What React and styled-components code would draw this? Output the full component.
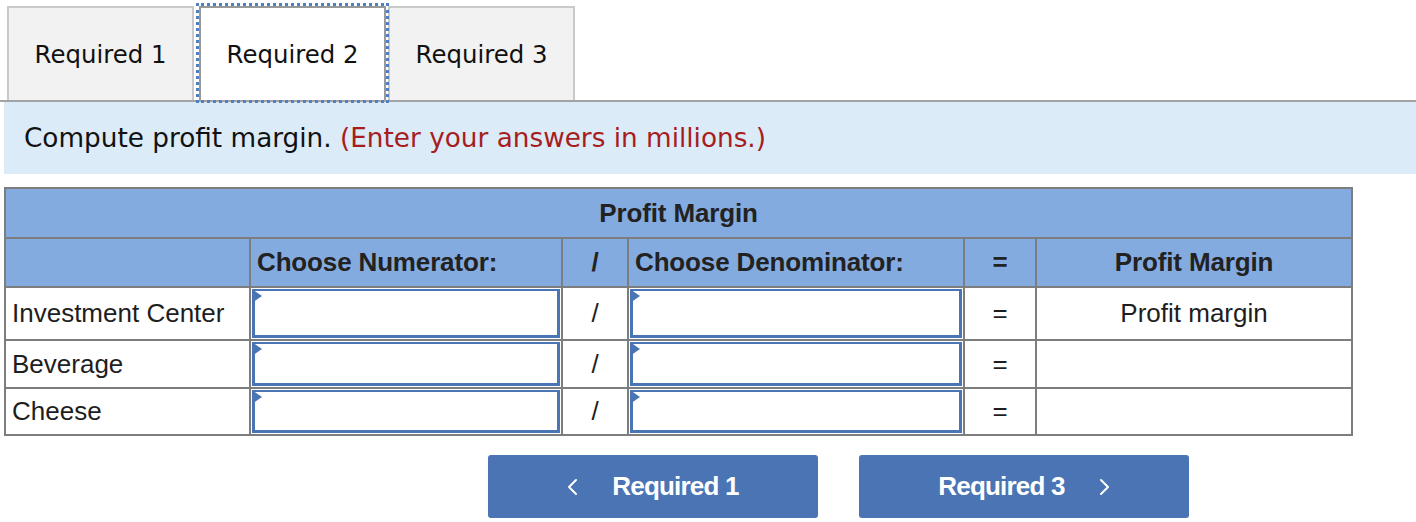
import React from 'react';
import styled, { createGlobalStyle } from 'styled-components';

const GlobalStyle = createGlobalStyle`
    body {
        margin: 0;
        background: #ffffff;
        font-family: 'Liberation Sans', Arial, sans-serif;
    }
`;

const rows = [
    { label: 'Investment Center', result: 'Profit margin', height: 53 },
    { label: 'Beverage', result: '', height: 48 },
    { label: 'Cheese', result: '', height: 47 },
];

function Chevron({ dir }) {
    const d = dir === 'left' ? 'M9 2 L2 9 L9 16' : 'M2 2 L9 9 L2 16';
    return (
        <svg width="11" height="18" viewBox="0 0 11 18">
            <path d={d} fill="none" stroke="#ffffff" strokeWidth="2" strokeLinecap="round" strokeLinejoin="round" />
        </svg>
    );
}

export default function App() {
    return (
        <Wrapper>
            <GlobalStyle />
            <TabBar>
                <Tab>Required 1</Tab>
                <Tab $active>Required 2</Tab>
                <Tab>Required 3</Tab>
            </TabBar>
            <Instruction>
                Compute profit margin. <Hint>(Enter your answers in millions.)</Hint>
            </Instruction>
            <Grid>
                <colgroup>
                    <col style={{ width: 245 }} />
                    <col style={{ width: 312 }} />
                    <col style={{ width: 66 }} />
                    <col style={{ width: 336 }} />
                    <col style={{ width: 72 }} />
                    <col style={{ width: 316 }} />
                </colgroup>
                <thead>
                    <HeadRow $h={50}>
                        <HeadCell colSpan={6} $align="center">Profit Margin</HeadCell>
                    </HeadRow>
                    <HeadRow $h={49}>
                        <HeadCell />
                        <HeadCell>Choose Numerator:</HeadCell>
                        <HeadCell $align="center">/</HeadCell>
                        <HeadCell>Choose Denominator:</HeadCell>
                        <HeadCell $align="center">=</HeadCell>
                        <HeadCell $align="center">Profit Margin</HeadCell>
                    </HeadRow>
                </thead>
                <tbody>
                    {rows.map((r) => (
                        <BodyRow key={r.label} $h={r.height}>
                            <Cell>{r.label}</Cell>
                            <InputCell><Field /></InputCell>
                            <Cell $align="center">/</Cell>
                            <InputCell><Field /></InputCell>
                            <Cell $align="center">=</Cell>
                            <Cell $align="center">{r.result}</Cell>
                        </BodyRow>
                    ))}
                </tbody>
            </Grid>
            <Buttons>
                <NavButton>
                    <Chevron dir="left" />
                    <span>Required 1</span>
                </NavButton>
                <NavButton>
                    <span>Required 3</span>
                    <Chevron dir="right" />
                </NavButton>
            </Buttons>
        </Wrapper>
    );
}

const Wrapper = styled.div`
    width: 1416px;
    height: 522px;
    overflow: hidden;
    padding-left: 4px;
    box-sizing: border-box;
`;

const TabBar = styled.div`
    display: flex;
    align-items: flex-end;
    height: 102px;
    box-sizing: border-box;
    border-bottom: 2px solid #a3a3a3;
    margin-left: -4px;
    padding-left: 7px;
`;

const Tab = styled.div`
    width: 187px;
    height: 94px;
    box-sizing: border-box;
    display: flex;
    align-items: center;
    justify-content: center;
    font-family: 'DejaVu Sans', Verdana, sans-serif;
    font-size: 24.4px;
    color: #111;
    background: ${(p) => (p.$active ? '#ffffff' : '#f2f2f2')};
    border: 2px solid ${(p) => (p.$active ? '#999999' : '#c9c9c9')};
    border-bottom: none;
    outline: ${(p) => (p.$active ? '3px dotted #4f7fc4' : 'none')};
    margin: ${(p) => (p.$active ? '0 2px 0 5px' : '0')};
    position: relative;
    z-index: ${(p) => (p.$active ? 1 : 0)};
`;

const Instruction = styled.div`
    height: 72px;
    display: flex;
    align-items: center;
    padding-left: 20px;
    background: #dcebf8;
    font-family: 'DejaVu Sans', Verdana, sans-serif;
    font-size: 26.3px;
    color: #111;
    white-space: pre;
`;

const Hint = styled.span`
    color: #a71d1d;
`;

const Grid = styled.table`
    margin-top: 13px;
    width: 1347px;
    table-layout: fixed;
    border-collapse: collapse;
    border: 2px solid #7d7d7d;
    font-size: 26px;
    line-height: 1.1;
    color: #1e1e1e;
`;

const HeadRow = styled.tr`
    height: ${(p) => p.$h}px;
`;

const BodyRow = styled.tr`
    height: ${(p) => p.$h}px;
`;

const HeadCell = styled.th`
    background: #84abdf;
    border: 2px solid #7d7d7d;
    font-weight: 700;
    text-align: ${(p) => p.$align || 'left'};
    padding: 0 6px;
    color: #222;
    white-space: nowrap;
    letter-spacing: -0.15px;
`;

const Cell = styled.td`
    border: 2px solid #7d7d7d;
    text-align: ${(p) => p.$align || 'left'};
    padding: 0 6px;
    white-space: nowrap;
    background: #ffffff;
`;

const InputCell = styled.td`
    border: 2px solid #7d7d7d;
    padding: 0;
    position: relative;
`;

const Field = styled.div`
    position: absolute;
    inset: 1px;
    border: 3px solid #4a75b4;
    border-top-width: 2px;
    background: #ffffff;

    &::before {
        content: '';
        position: absolute;
        left: -3px;
        top: -2px;
        border-top: 7px solid transparent;
        border-bottom: 7px solid transparent;
        border-left: 10px solid #4a75b4;
    }
`;

const Buttons = styled.div`
    display: flex;
    gap: 41px;
    margin-top: 19px;
    padding-left: 484px;
`;

const NavButton = styled.button`
    width: 330px;
    height: 63px;
    display: flex;
    align-items: center;
    justify-content: center;
    gap: 34px;
    background: #4a74b4;
    border: none;
    border-radius: 3px;
    color: #ffffff;
    font-family: 'Liberation Sans', Arial, sans-serif;
    font-weight: 700;
    font-size: 26px;
    letter-spacing: -0.8px;
    cursor: pointer;
`;
